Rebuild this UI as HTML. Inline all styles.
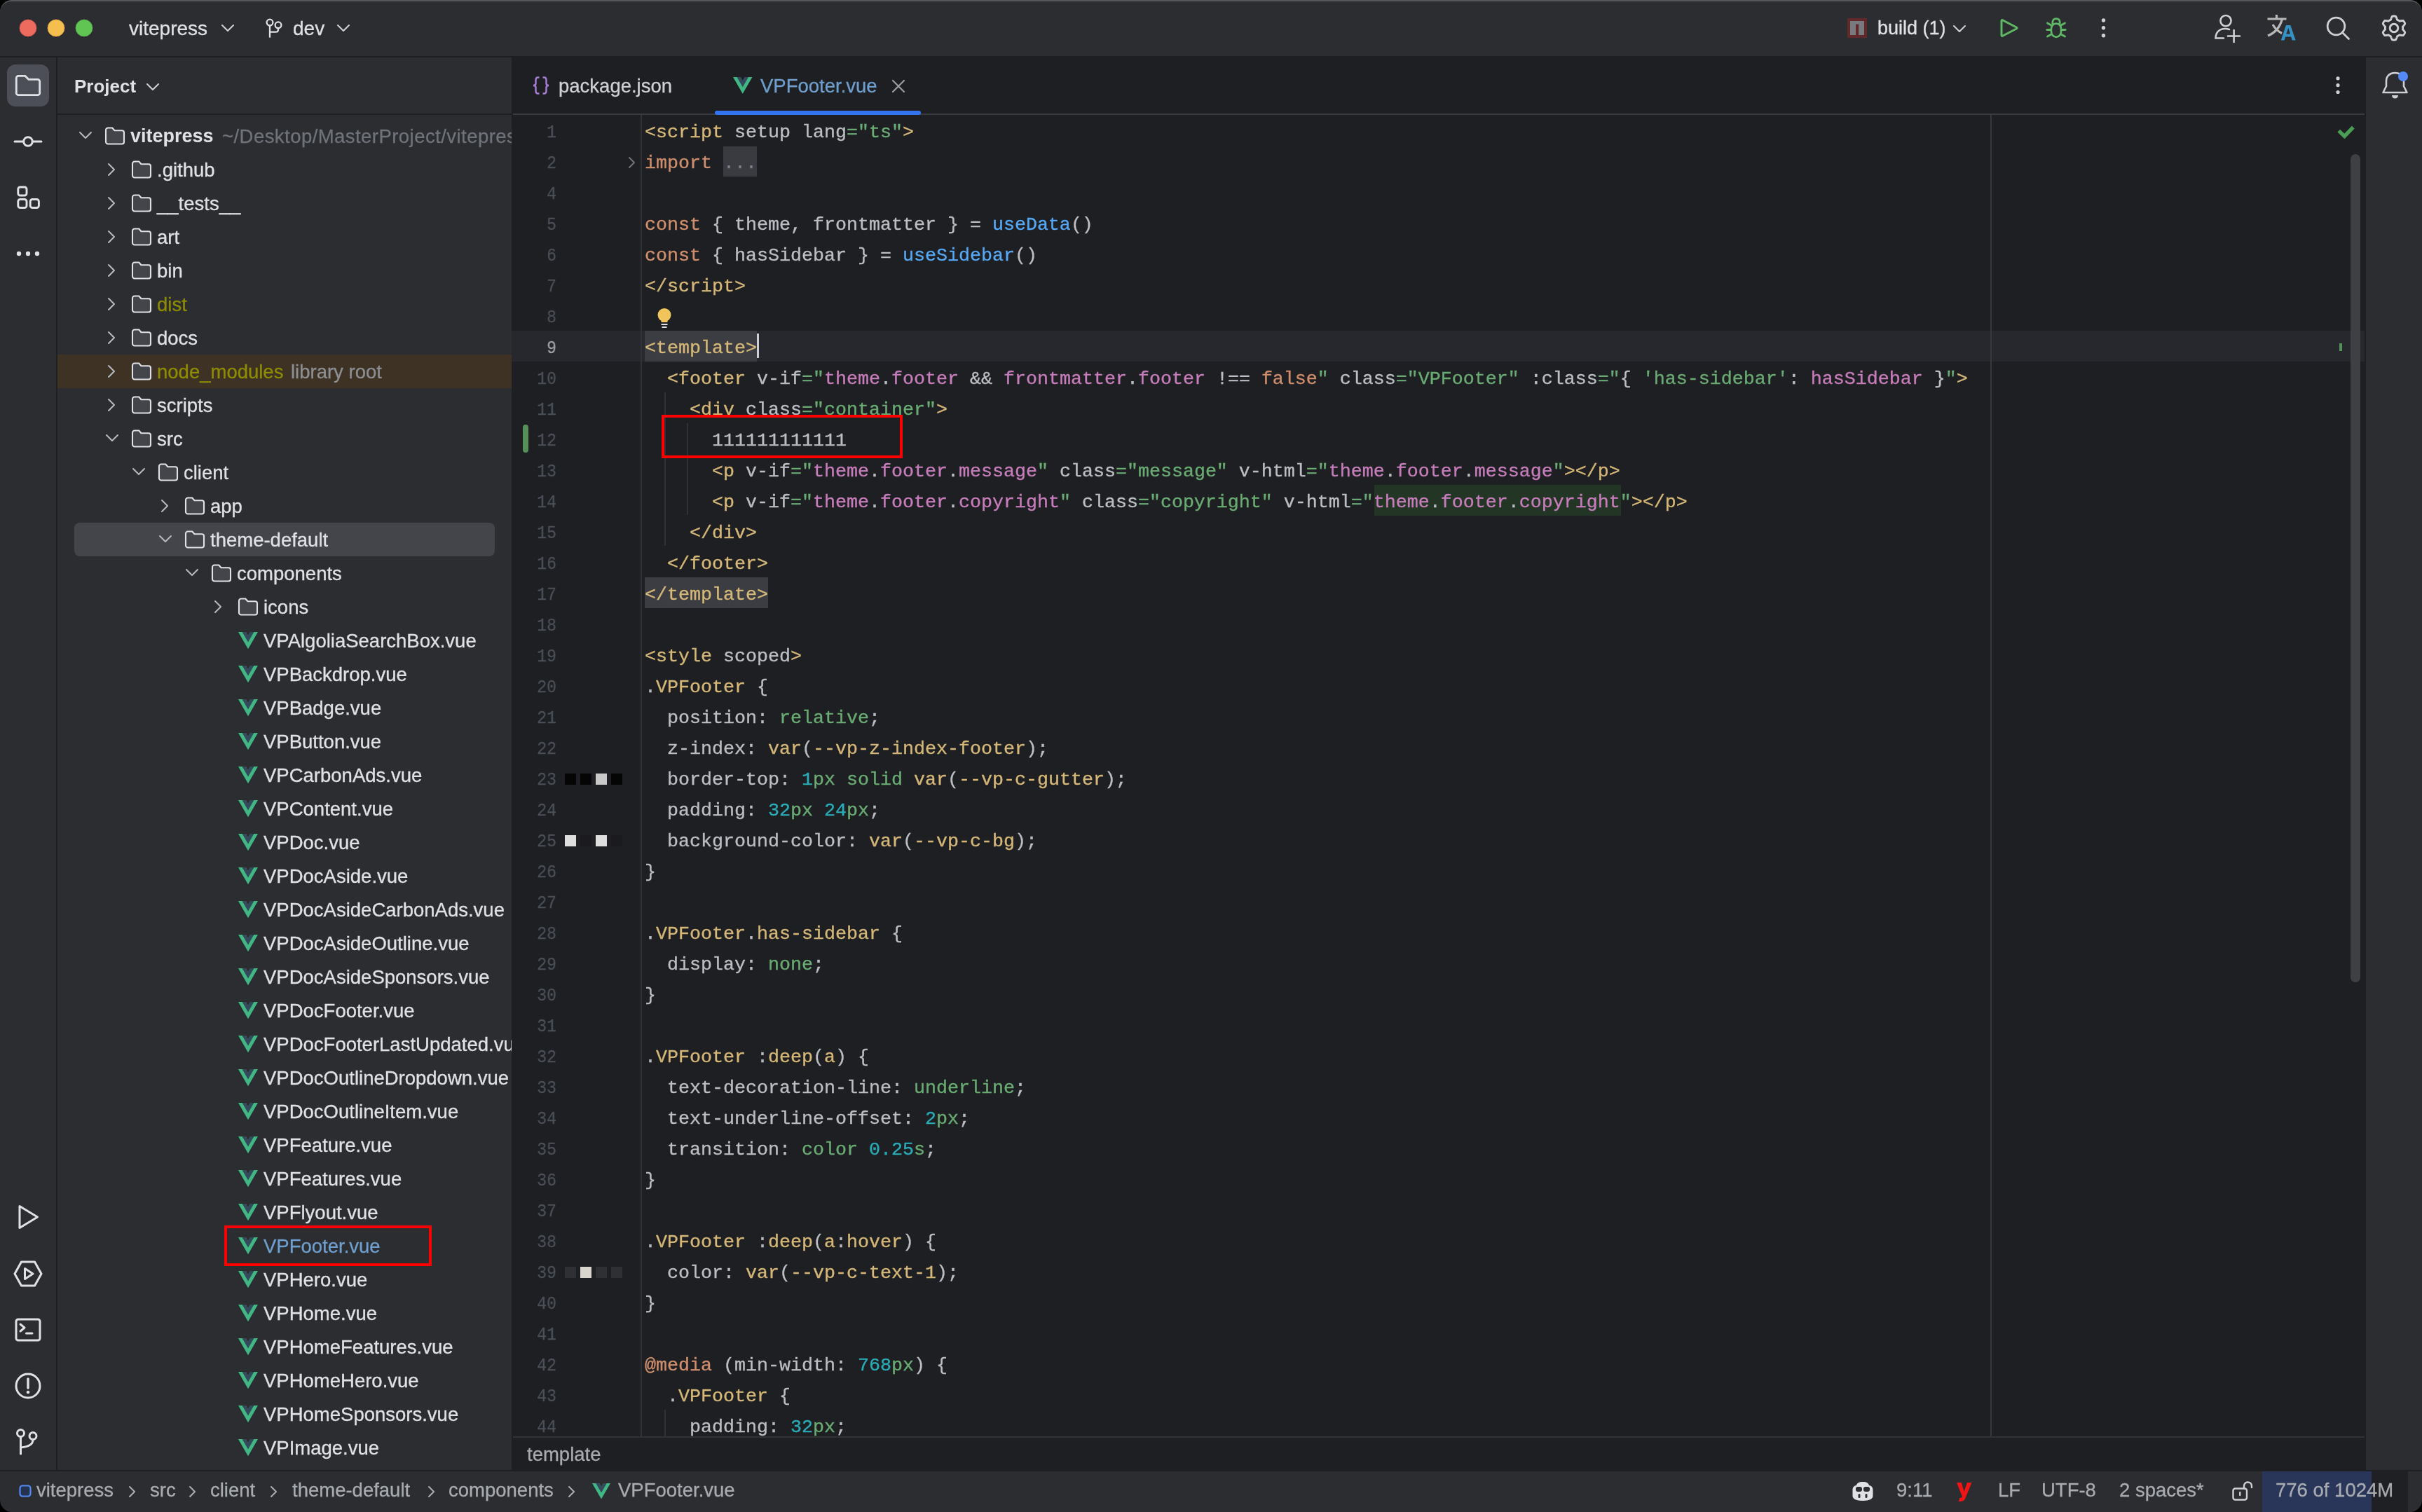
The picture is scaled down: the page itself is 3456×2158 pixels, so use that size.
<!DOCTYPE html><html><head><meta charset="utf-8"><style>html,body{margin:0;padding:0;background:#000;width:3456px;height:2158px;overflow:hidden}.t{will-change:transform}#w{position:absolute;left:0;top:0;width:3456px;height:2158px;border-radius:17px;overflow:hidden;background:#2B2D30}</style></head><body><div id="w"><div style="position:absolute;left:0px;top:80px;width:3456px;height:2px;background:#1E1F22;"></div><div style="position:absolute;left:80px;top:82px;width:2px;height:2016px;background:#1E1F22;"></div><div style="position:absolute;left:730px;top:82px;width:2646px;height:2016px;background:#1E1F22;"></div><div style="position:absolute;left:3376px;top:82px;width:80px;height:2016px;background:#2B2D30;"></div><div style="position:absolute;left:0px;top:2098px;width:3456px;height:2px;background:#1E1F22;"></div><div style="position:absolute;left:0px;top:0px;width:3456px;height:40px;background:transparent;box-sizing:border-box;border-top:2px solid #55575B;border-radius:17px 17px 0 0"></div><svg style="position:absolute;left:27px;top:27px;" width="26" height="26" viewBox="0 0 26 26"><circle cx="13" cy="13" r="12" fill="#EC6A5E" stroke="#D0584D" stroke-width="0.8"/></svg><svg style="position:absolute;left:67px;top:27px;" width="26" height="26" viewBox="0 0 26 26"><circle cx="13" cy="13" r="12" fill="#F4BF4F" stroke="#D6A440" stroke-width="0.8"/></svg><svg style="position:absolute;left:107px;top:27px;" width="26" height="26" viewBox="0 0 26 26"><circle cx="13" cy="13" r="12" fill="#61C554" stroke="#51A747" stroke-width="0.8"/></svg><div class="t" style="position:absolute;left:184px;top:23.50px;font:normal 28px/33.6px 'Liberation Sans', sans-serif;color:#DFE1E5;white-space:pre;-webkit-text-stroke:0.3px currentColor;">vitepress</div><svg style="position:absolute;left:315px;top:34px;" width="20" height="12" viewBox="0 0 20 12"><path d="M2 2 L10.0 10 L18 2" fill="none" stroke="#CED0D6" stroke-width="2.1" stroke-linecap="round" stroke-linejoin="round"/></svg><svg style="position:absolute;left:376px;top:24px;" width="30" height="34" viewBox="0 0 30 34"><g fill="none" stroke="#DFE1E5" stroke-width="2.3"><circle cx="9" cy="8.1" r="4.4"/><circle cx="21" cy="11.8" r="4.4"/><path d="M9 12.5 V29.6"/><path d="M21 16.2 V18 Q21 21.7 17.3 21.7 H9"/></g></svg><div class="t" style="position:absolute;left:418px;top:23.50px;font:normal 28px/33.6px 'Liberation Sans', sans-serif;color:#DFE1E5;white-space:pre;-webkit-text-stroke:0.3px currentColor;">dev</div><svg style="position:absolute;left:480px;top:34px;" width="20" height="12" viewBox="0 0 20 12"><path d="M2 2 L10.0 10 L18 2" fill="none" stroke="#CED0D6" stroke-width="2.1" stroke-linecap="round" stroke-linejoin="round"/></svg><svg style="position:absolute;left:2636px;top:26px;" width="28" height="28" viewBox="0 0 28 28"><rect x="0" y="0" width="28" height="28" fill="#62292B"/><rect x="4" y="4" width="20" height="20" fill="#787A7F"/><rect x="12" y="8.5" width="4.2" height="15.5" fill="#62292B"/></svg><div class="t" style="position:absolute;left:2679px;top:24.44px;font:normal 27px/32.4px 'Liberation Sans', sans-serif;color:#DFE1E5;white-space:pre;-webkit-text-stroke:0.3px currentColor;">build (1)</div><svg style="position:absolute;left:2786px;top:35px;" width="20" height="12" viewBox="0 0 20 12"><path d="M2 2 L10.0 10 L18 2" fill="none" stroke="#CED0D6" stroke-width="2.1" stroke-linecap="round" stroke-linejoin="round"/></svg><svg style="position:absolute;left:2850px;top:22px;" width="34" height="36" viewBox="0 0 34 36"><path d="M8 7 Q6 5.6 6 8 V28 Q6 30.4 8 29 L27.3 19 Q29 18 27.3 17 Z" fill="none" stroke="#5FB865" stroke-width="3" stroke-linejoin="round"/></svg><svg style="position:absolute;left:2916px;top:22px;" width="36" height="36" viewBox="0 0 36 36"><g fill="none" stroke="#5FB865" stroke-width="2.8" stroke-linecap="round"><path d="M12.8 11.5 V10 C12.8 6.5 15 4.6 18 4.6 C21 4.6 23.2 6.5 23.2 10 V11.5"/><path d="M18 11.6 C13.4 11.6 10.8 15 10.8 21.3 C10.8 27.5 14 30.8 18 30.8 C22 30.8 25.2 27.5 25.2 21.3 C25.2 15 22.6 11.6 18 11.6 Z"/><path d="M5.5 11 L11 14 M30.5 11 L25 14 M4.8 20.5 H10.5 M31.2 20.5 H25.5 M5.5 30 L11 27 M30.5 30 L25 27"/></g></svg><svg style="position:absolute;left:2996px;top:24px;" width="12" height="34" viewBox="0 0 12 34"><g fill="#CED0D6"><circle cx="5.5" cy="5" r="2.7"/><circle cx="5.5" cy="15.8" r="2.7"/><circle cx="5.5" cy="26.7" r="2.7"/></g></svg><svg style="position:absolute;left:3158px;top:20px;" width="42" height="42" viewBox="0 0 42 42"><g fill="none" stroke="#CED0D6" stroke-width="2.6" stroke-linecap="round"><circle cx="18" cy="9.6" r="7.6"/><path d="M15 34.5 H3.5 C3.5 26 9 21 17 21 C19 21 21 21.3 23 22"/><path d="M29.6 23 V40 M21 31.5 H38"/></g></svg><svg style="position:absolute;left:3234px;top:20px;" width="46" height="42" viewBox="0 0 46 42"><g fill="none" stroke="#B8B8B8" stroke-width="3.2"><path d="M1.5 7 H28.5 M14.5 1 V7"/><path d="M22.5 7 C19 20 12 27 2 31"/><path d="M9 15 C13 22 17 25 22 27.5"/></g><path d="M20.8 37.6 L28 16 H34.3 L41.7 37.6 H36.8 L35.2 32.6 H27.2 L25.6 37.6 Z M28.4 28.6 H34 L31.2 19.8 Z" fill="#3592C4"/></svg><svg style="position:absolute;left:3318px;top:22px;" width="38" height="38" viewBox="0 0 38 38"><g fill="none" stroke="#CED0D6" stroke-width="2.8" stroke-linecap="round"><circle cx="15.5" cy="15.5" r="12.3"/><path d="M24.5 24.5 L33.5 33.5"/></g></svg><svg style="position:absolute;left:3396px;top:20px;" width="40" height="40" viewBox="0 0 40 40"><g fill="none" stroke="#CED0D6" stroke-width="2.9" stroke-linejoin="round"><polygon points="20.00,3.00 20.30,3.00 20.59,3.01 20.89,3.02 21.19,3.04 21.48,3.06 21.78,3.09 22.07,3.13 22.37,3.17 22.61,3.51 22.84,3.89 23.06,4.28 23.26,4.67 23.45,5.06 23.63,5.45 23.79,5.85 23.94,6.24 24.08,6.64 24.21,7.04 24.33,7.44 24.43,7.84 24.52,8.23 24.72,8.32 24.92,8.40 25.12,8.49 25.32,8.58 25.52,8.68 25.72,8.77 25.92,8.87 26.11,8.98 26.30,9.09 26.49,9.20 26.68,9.31 26.86,9.43 27.05,9.55 27.23,9.68 27.41,9.81 27.58,9.94 27.76,10.07 27.93,10.21 28.32,10.08 28.72,9.97 29.12,9.87 29.53,9.78 29.94,9.71 30.36,9.64 30.78,9.59 31.21,9.54 31.65,9.51 32.09,9.49 32.53,9.49 32.98,9.49 33.40,9.53 33.58,9.77 33.75,10.01 33.93,10.25 34.09,10.49 34.26,10.74 34.42,10.99 34.57,11.24 34.72,11.50 34.87,11.76 35.01,12.02 35.15,12.28 35.28,12.55 35.41,12.82 35.53,13.09 35.65,13.36 35.76,13.63 35.59,14.02 35.37,14.41 35.14,14.79 34.91,15.16 34.66,15.52 34.41,15.87 34.15,16.21 33.88,16.54 33.61,16.86 33.33,17.17 33.04,17.47 32.75,17.75 32.45,18.03 32.48,18.25 32.51,18.46 32.53,18.68 32.55,18.90 32.57,19.12 32.58,19.34 32.59,19.56 32.60,19.78 32.60,20.00 32.60,20.22 32.59,20.44 32.58,20.66 32.57,20.88 32.55,21.10 32.53,21.32 32.51,21.54 32.48,21.75 32.45,21.97 32.75,22.25 33.04,22.53 33.33,22.83 33.61,23.14 33.88,23.46 34.15,23.79 34.41,24.13 34.66,24.48 34.91,24.84 35.14,25.21 35.37,25.59 35.59,25.98 35.76,26.37 35.65,26.64 35.53,26.91 35.41,27.18 35.28,27.45 35.15,27.72 35.01,27.98 34.87,28.24 34.72,28.50 34.57,28.76 34.42,29.01 34.26,29.26 34.09,29.51 33.93,29.75 33.75,29.99 33.58,30.23 33.40,30.47 32.98,30.51 32.53,30.51 32.09,30.51 31.65,30.49 31.21,30.46 30.78,30.41 30.36,30.36 29.94,30.29 29.53,30.22 29.12,30.13 28.72,30.03 28.32,29.92 27.93,29.79 27.76,29.93 27.58,30.06 27.41,30.19 27.23,30.32 27.05,30.45 26.86,30.57 26.68,30.69 26.49,30.80 26.30,30.91 26.11,31.02 25.92,31.13 25.72,31.23 25.52,31.32 25.32,31.42 25.12,31.51 24.92,31.60 24.72,31.68 24.52,31.77 24.43,32.16 24.33,32.56 24.21,32.96 24.08,33.36 23.94,33.76 23.79,34.15 23.63,34.55 23.45,34.94 23.26,35.33 23.06,35.72 22.84,36.11 22.61,36.49 22.37,36.83 22.07,36.87 21.78,36.91 21.48,36.94 21.19,36.96 20.89,36.98 20.59,36.99 20.30,37.00 20.00,37.00 19.70,37.00 19.41,36.99 19.11,36.98 18.81,36.96 18.52,36.94 18.22,36.91 17.93,36.87 17.63,36.83 17.39,36.49 17.16,36.11 16.94,35.72 16.74,35.33 16.55,34.94 16.37,34.55 16.21,34.15 16.06,33.76 15.92,33.36 15.79,32.96 15.67,32.56 15.57,32.16 15.48,31.77 15.28,31.68 15.08,31.60 14.88,31.51 14.68,31.42 14.48,31.32 14.28,31.23 14.08,31.13 13.89,31.02 13.70,30.91 13.51,30.80 13.32,30.69 13.14,30.57 12.95,30.45 12.77,30.32 12.59,30.19 12.42,30.06 12.24,29.93 12.07,29.79 11.68,29.92 11.28,30.03 10.88,30.13 10.47,30.22 10.06,30.29 9.64,30.36 9.22,30.41 8.79,30.46 8.35,30.49 7.91,30.51 7.47,30.51 7.02,30.51 6.60,30.47 6.42,30.23 6.25,29.99 6.07,29.75 5.91,29.51 5.74,29.26 5.58,29.01 5.43,28.76 5.28,28.50 5.13,28.24 4.99,27.98 4.85,27.72 4.72,27.45 4.59,27.18 4.47,26.91 4.35,26.64 4.24,26.37 4.41,25.98 4.63,25.59 4.86,25.21 5.09,24.84 5.34,24.48 5.59,24.13 5.85,23.79 6.12,23.46 6.39,23.14 6.67,22.83 6.96,22.53 7.25,22.25 7.55,21.97 7.52,21.75 7.49,21.54 7.47,21.32 7.45,21.10 7.43,20.88 7.42,20.66 7.41,20.44 7.40,20.22 7.40,20.00 7.40,19.78 7.41,19.56 7.42,19.34 7.43,19.12 7.45,18.90 7.47,18.68 7.49,18.46 7.52,18.25 7.55,18.03 7.25,17.75 6.96,17.47 6.67,17.17 6.39,16.86 6.12,16.54 5.85,16.21 5.59,15.87 5.34,15.52 5.09,15.16 4.86,14.79 4.63,14.41 4.41,14.02 4.24,13.63 4.35,13.36 4.47,13.09 4.59,12.82 4.72,12.55 4.85,12.28 4.99,12.02 5.13,11.76 5.28,11.50 5.43,11.24 5.58,10.99 5.74,10.74 5.91,10.49 6.07,10.25 6.25,10.01 6.42,9.77 6.60,9.53 7.02,9.49 7.47,9.49 7.91,9.49 8.35,9.51 8.79,9.54 9.22,9.59 9.64,9.64 10.06,9.71 10.47,9.78 10.88,9.87 11.28,9.97 11.68,10.08 12.07,10.21 12.24,10.07 12.42,9.94 12.59,9.81 12.77,9.68 12.95,9.55 13.14,9.43 13.32,9.31 13.51,9.20 13.70,9.09 13.89,8.98 14.08,8.87 14.28,8.77 14.48,8.68 14.68,8.58 14.88,8.49 15.08,8.40 15.28,8.32 15.48,8.23 15.57,7.84 15.67,7.44 15.79,7.04 15.92,6.64 16.06,6.24 16.21,5.85 16.37,5.45 16.55,5.06 16.74,4.67 16.94,4.28 17.16,3.89 17.39,3.51 17.63,3.17 17.93,3.13 18.22,3.09 18.52,3.06 18.81,3.04 19.11,3.02 19.41,3.01 19.70,3.00"/><circle cx="20" cy="20" r="5.8"/></g></svg><div style="position:absolute;left:10px;top:92px;width:60px;height:60px;background:#4C4F57;border-radius:12px"></div><svg style="position:absolute;left:20px;top:106px;" width="40" height="36" viewBox="0 0 40 36"><path d="M3.3 5.3 a3 3 0 0 1 3-3 h9.5 l4.9 5 h13 a3 3 0 0 1 3 3 v16.4 a3 3 0 0 1 -3 3 h-27.4 a3 3 0 0 1 -3 -3 z" fill="none" stroke="#DFE1E5" stroke-width="2.8" stroke-linejoin="round"/></svg><svg style="position:absolute;left:18px;top:190px;" width="44" height="24" viewBox="0 0 44 24"><g fill="none" stroke="#DFE1E5" stroke-width="3" stroke-linecap="round"><circle cx="22" cy="12" r="6.3"/><path d="M3 12 H15.7 M28.3 12 H41"/></g></svg><svg style="position:absolute;left:22px;top:263px;" width="36" height="37" viewBox="0 0 36 37"><g fill="none" stroke="#DFE1E5" stroke-width="2.9"><rect x="3.8" y="4" width="12.2" height="12" rx="3"/><rect x="3.8" y="21.5" width="12.2" height="12" rx="3"/><rect x="21.2" y="21.5" width="12.2" height="12" rx="3"/></g></svg><svg style="position:absolute;left:20px;top:354px;" width="40" height="16" viewBox="0 0 40 16"><g fill="#DFE1E5"><circle cx="7" cy="8" r="3.2"/><circle cx="20" cy="8" r="3.2"/><circle cx="33" cy="8" r="3.2"/></g></svg><svg style="position:absolute;left:20px;top:1716px;" width="40" height="42" viewBox="0 0 40 42"><path d="M8 5.5 L33.5 21 L8 36.5 Z" fill="none" stroke="#DFE1E5" stroke-width="3" stroke-linejoin="round"/></svg><svg style="position:absolute;left:18px;top:1797px;" width="44" height="42" viewBox="0 0 44 42"><g fill="none" stroke="#DFE1E5" stroke-width="3" stroke-linejoin="round"><path d="M12.5 4 H31.5 L41 21 L31.5 38 H12.5 L3 21 Z"/><path d="M17.5 13.5 L29 21 L17.5 28.5 Z"/></g></svg><svg style="position:absolute;left:18px;top:1879px;" width="44" height="38" viewBox="0 0 44 38"><g fill="none" stroke="#DFE1E5" stroke-width="3" stroke-linejoin="round" stroke-linecap="round"><rect x="5" y="4" width="34" height="30" rx="3"/><path d="M11 11 L17 16 L11 21"/><path d="M19.5 24 H28"/></g></svg><svg style="position:absolute;left:19px;top:1957px;" width="42" height="42" viewBox="0 0 42 42"><g fill="none" stroke="#DFE1E5" stroke-width="3"><circle cx="21" cy="21" r="17"/></g><path d="M21 11 V24" stroke="#DFE1E5" stroke-width="3.4" stroke-linecap="round"/><circle cx="21" cy="30" r="2.3" fill="#DFE1E5"/></svg><svg style="position:absolute;left:20px;top:2036px;" width="40" height="44" viewBox="0 0 40 44"><g fill="none" stroke="#DFE1E5" stroke-width="3" stroke-linecap="round"><circle cx="9.5" cy="9.5" r="5"/><circle cx="27" cy="13.5" r="5"/><path d="M9.5 14.5 V39"/><path d="M27 18.5 C27 26 21 28.5 9.5 30"/></g></svg><div style="position:absolute;left:82px;top:162px;width:648px;height:2px;background:#1E1F22;"></div><div class="t" style="position:absolute;left:106px;top:107.79px;font:bold 26px/31.2px 'Liberation Sans', sans-serif;color:#DFE1E5;white-space:pre;">Project</div><svg style="position:absolute;left:208px;top:117.5px;" width="20" height="12" viewBox="0 0 20 12"><path d="M2 2 L10.0 10 L18 2" fill="none" stroke="#CED0D6" stroke-width="2.1" stroke-linecap="round" stroke-linejoin="round"/></svg><div style="position:absolute;left:82px;top:506px;width:648px;height:48px;background:#3D3223;"></div><div style="position:absolute;left:106px;top:746px;width:600px;height:48px;background:#43454A;border-radius:8px"></div><div style="position:absolute;left:82px;top:164px;width:648px;height:1934px;overflow:hidden"><svg style="position:absolute;left:30px;top:23px;" width="20" height="13" viewBox="0 0 20 13"><path d="M2 2 L10 10 L18 2" fill="none" stroke="#B4B8BF" stroke-width="2.1" stroke-linecap="round" stroke-linejoin="round"/></svg><svg style="position:absolute;left:65.5px;top:16px;" width="32" height="28" viewBox="0 0 32 28"><path d="M3 5.5 a3 3 0 0 1 3-3 h6.2 l3.3 3.8 h10.5 a3 3 0 0 1 3 3 v13.2 a3 3 0 0 1 -3 3 h-20 a3 3 0 0 1 -3 -3 z" fill="#43454A" stroke="#DFE1E5" stroke-width="2.1" stroke-linejoin="round"/></svg><div class="t" style="position:absolute;left:104.30000000000001px;top:14.44px;font:bold 27px/32.4px 'Liberation Sans', sans-serif;color:#DFE1E5;white-space:pre;">vitepress</div><div class="t" style="position:absolute;left:235px;top:13.97px;font:normal 27.5px/33.0px 'Liberation Sans', sans-serif;color:#6F737A;white-space:pre;-webkit-text-stroke:0.3px currentColor;letter-spacing:0.45px">~/Desktop/MasterProject/vitepress</div><svg style="position:absolute;left:71px;top:68px;" width="13" height="20" viewBox="0 0 13 20"><path d="M2 2 L10 10 L2 18" fill="none" stroke="#B4B8BF" stroke-width="2.1" stroke-linecap="round" stroke-linejoin="round"/></svg><svg style="position:absolute;left:103.5px;top:64px;" width="32" height="28" viewBox="0 0 32 28"><path d="M3 5.5 a3 3 0 0 1 3-3 h6.2 l3.3 3.8 h10.5 a3 3 0 0 1 3 3 v13.2 a3 3 0 0 1 -3 3 h-20 a3 3 0 0 1 -3 -3 z" fill="#43454A" stroke="#DFE1E5" stroke-width="2.1" stroke-linejoin="round"/></svg><div class="t" style="position:absolute;left:142.3px;top:61.97px;font:normal 27.5px/33.0px 'Liberation Sans', sans-serif;color:#DFE1E5;white-space:pre;-webkit-text-stroke:0.3px currentColor;">.github</div><svg style="position:absolute;left:71px;top:116px;" width="13" height="20" viewBox="0 0 13 20"><path d="M2 2 L10 10 L2 18" fill="none" stroke="#B4B8BF" stroke-width="2.1" stroke-linecap="round" stroke-linejoin="round"/></svg><svg style="position:absolute;left:103.5px;top:112px;" width="32" height="28" viewBox="0 0 32 28"><path d="M3 5.5 a3 3 0 0 1 3-3 h6.2 l3.3 3.8 h10.5 a3 3 0 0 1 3 3 v13.2 a3 3 0 0 1 -3 3 h-20 a3 3 0 0 1 -3 -3 z" fill="#43454A" stroke="#DFE1E5" stroke-width="2.1" stroke-linejoin="round"/></svg><div class="t" style="position:absolute;left:142.3px;top:109.97px;font:normal 27.5px/33.0px 'Liberation Sans', sans-serif;color:#DFE1E5;white-space:pre;-webkit-text-stroke:0.3px currentColor;">__tests__</div><svg style="position:absolute;left:71px;top:164px;" width="13" height="20" viewBox="0 0 13 20"><path d="M2 2 L10 10 L2 18" fill="none" stroke="#B4B8BF" stroke-width="2.1" stroke-linecap="round" stroke-linejoin="round"/></svg><svg style="position:absolute;left:103.5px;top:160px;" width="32" height="28" viewBox="0 0 32 28"><path d="M3 5.5 a3 3 0 0 1 3-3 h6.2 l3.3 3.8 h10.5 a3 3 0 0 1 3 3 v13.2 a3 3 0 0 1 -3 3 h-20 a3 3 0 0 1 -3 -3 z" fill="#43454A" stroke="#DFE1E5" stroke-width="2.1" stroke-linejoin="round"/></svg><div class="t" style="position:absolute;left:142.3px;top:157.97px;font:normal 27.5px/33.0px 'Liberation Sans', sans-serif;color:#DFE1E5;white-space:pre;-webkit-text-stroke:0.3px currentColor;">art</div><svg style="position:absolute;left:71px;top:212px;" width="13" height="20" viewBox="0 0 13 20"><path d="M2 2 L10 10 L2 18" fill="none" stroke="#B4B8BF" stroke-width="2.1" stroke-linecap="round" stroke-linejoin="round"/></svg><svg style="position:absolute;left:103.5px;top:208px;" width="32" height="28" viewBox="0 0 32 28"><path d="M3 5.5 a3 3 0 0 1 3-3 h6.2 l3.3 3.8 h10.5 a3 3 0 0 1 3 3 v13.2 a3 3 0 0 1 -3 3 h-20 a3 3 0 0 1 -3 -3 z" fill="#43454A" stroke="#DFE1E5" stroke-width="2.1" stroke-linejoin="round"/></svg><div class="t" style="position:absolute;left:142.3px;top:205.97px;font:normal 27.5px/33.0px 'Liberation Sans', sans-serif;color:#DFE1E5;white-space:pre;-webkit-text-stroke:0.3px currentColor;">bin</div><svg style="position:absolute;left:71px;top:260px;" width="13" height="20" viewBox="0 0 13 20"><path d="M2 2 L10 10 L2 18" fill="none" stroke="#B4B8BF" stroke-width="2.1" stroke-linecap="round" stroke-linejoin="round"/></svg><svg style="position:absolute;left:103.5px;top:256px;" width="32" height="28" viewBox="0 0 32 28"><path d="M3 5.5 a3 3 0 0 1 3-3 h6.2 l3.3 3.8 h10.5 a3 3 0 0 1 3 3 v13.2 a3 3 0 0 1 -3 3 h-20 a3 3 0 0 1 -3 -3 z" fill="#43454A" stroke="#DFE1E5" stroke-width="2.1" stroke-linejoin="round"/></svg><div class="t" style="position:absolute;left:142.3px;top:253.97px;font:normal 27.5px/33.0px 'Liberation Sans', sans-serif;color:#8E8C05;white-space:pre;-webkit-text-stroke:0.3px currentColor;">dist</div><svg style="position:absolute;left:71px;top:308px;" width="13" height="20" viewBox="0 0 13 20"><path d="M2 2 L10 10 L2 18" fill="none" stroke="#B4B8BF" stroke-width="2.1" stroke-linecap="round" stroke-linejoin="round"/></svg><svg style="position:absolute;left:103.5px;top:304px;" width="32" height="28" viewBox="0 0 32 28"><path d="M3 5.5 a3 3 0 0 1 3-3 h6.2 l3.3 3.8 h10.5 a3 3 0 0 1 3 3 v13.2 a3 3 0 0 1 -3 3 h-20 a3 3 0 0 1 -3 -3 z" fill="#43454A" stroke="#DFE1E5" stroke-width="2.1" stroke-linejoin="round"/></svg><div class="t" style="position:absolute;left:142.3px;top:301.97px;font:normal 27.5px/33.0px 'Liberation Sans', sans-serif;color:#DFE1E5;white-space:pre;-webkit-text-stroke:0.3px currentColor;">docs</div><svg style="position:absolute;left:71px;top:356px;" width="13" height="20" viewBox="0 0 13 20"><path d="M2 2 L10 10 L2 18" fill="none" stroke="#B4B8BF" stroke-width="2.1" stroke-linecap="round" stroke-linejoin="round"/></svg><svg style="position:absolute;left:103.5px;top:352px;" width="32" height="28" viewBox="0 0 32 28"><path d="M3 5.5 a3 3 0 0 1 3-3 h6.2 l3.3 3.8 h10.5 a3 3 0 0 1 3 3 v13.2 a3 3 0 0 1 -3 3 h-20 a3 3 0 0 1 -3 -3 z" fill="#43454A" stroke="#DFE1E5" stroke-width="2.1" stroke-linejoin="round"/></svg><div class="t" style="position:absolute;left:142.3px;top:349.97px;font:normal 27.5px/33.0px 'Liberation Sans', sans-serif;color:#8E8C05;white-space:pre;-webkit-text-stroke:0.3px currentColor;">node_modules</div><div class="t" style="position:absolute;left:332.5px;top:349.97px;font:normal 27.5px/33.0px 'Liberation Sans', sans-serif;color:#8C8F94;white-space:pre;-webkit-text-stroke:0.3px currentColor;">library root</div><svg style="position:absolute;left:71px;top:404px;" width="13" height="20" viewBox="0 0 13 20"><path d="M2 2 L10 10 L2 18" fill="none" stroke="#B4B8BF" stroke-width="2.1" stroke-linecap="round" stroke-linejoin="round"/></svg><svg style="position:absolute;left:103.5px;top:400px;" width="32" height="28" viewBox="0 0 32 28"><path d="M3 5.5 a3 3 0 0 1 3-3 h6.2 l3.3 3.8 h10.5 a3 3 0 0 1 3 3 v13.2 a3 3 0 0 1 -3 3 h-20 a3 3 0 0 1 -3 -3 z" fill="#43454A" stroke="#DFE1E5" stroke-width="2.1" stroke-linejoin="round"/></svg><div class="t" style="position:absolute;left:142.3px;top:397.97px;font:normal 27.5px/33.0px 'Liberation Sans', sans-serif;color:#DFE1E5;white-space:pre;-webkit-text-stroke:0.3px currentColor;">scripts</div><svg style="position:absolute;left:68px;top:455px;" width="20" height="13" viewBox="0 0 20 13"><path d="M2 2 L10 10 L18 2" fill="none" stroke="#B4B8BF" stroke-width="2.1" stroke-linecap="round" stroke-linejoin="round"/></svg><svg style="position:absolute;left:103.5px;top:448px;" width="32" height="28" viewBox="0 0 32 28"><path d="M3 5.5 a3 3 0 0 1 3-3 h6.2 l3.3 3.8 h10.5 a3 3 0 0 1 3 3 v13.2 a3 3 0 0 1 -3 3 h-20 a3 3 0 0 1 -3 -3 z" fill="#43454A" stroke="#DFE1E5" stroke-width="2.1" stroke-linejoin="round"/></svg><div class="t" style="position:absolute;left:142.3px;top:445.97px;font:normal 27.5px/33.0px 'Liberation Sans', sans-serif;color:#DFE1E5;white-space:pre;-webkit-text-stroke:0.3px currentColor;">src</div><svg style="position:absolute;left:106px;top:503px;" width="20" height="13" viewBox="0 0 20 13"><path d="M2 2 L10 10 L18 2" fill="none" stroke="#B4B8BF" stroke-width="2.1" stroke-linecap="round" stroke-linejoin="round"/></svg><svg style="position:absolute;left:141.5px;top:496px;" width="32" height="28" viewBox="0 0 32 28"><path d="M3 5.5 a3 3 0 0 1 3-3 h6.2 l3.3 3.8 h10.5 a3 3 0 0 1 3 3 v13.2 a3 3 0 0 1 -3 3 h-20 a3 3 0 0 1 -3 -3 z" fill="#43454A" stroke="#DFE1E5" stroke-width="2.1" stroke-linejoin="round"/></svg><div class="t" style="position:absolute;left:180.3px;top:493.97px;font:normal 27.5px/33.0px 'Liberation Sans', sans-serif;color:#DFE1E5;white-space:pre;-webkit-text-stroke:0.3px currentColor;">client</div><svg style="position:absolute;left:147px;top:548px;" width="13" height="20" viewBox="0 0 13 20"><path d="M2 2 L10 10 L2 18" fill="none" stroke="#B4B8BF" stroke-width="2.1" stroke-linecap="round" stroke-linejoin="round"/></svg><svg style="position:absolute;left:179.5px;top:544px;" width="32" height="28" viewBox="0 0 32 28"><path d="M3 5.5 a3 3 0 0 1 3-3 h6.2 l3.3 3.8 h10.5 a3 3 0 0 1 3 3 v13.2 a3 3 0 0 1 -3 3 h-20 a3 3 0 0 1 -3 -3 z" fill="#43454A" stroke="#DFE1E5" stroke-width="2.1" stroke-linejoin="round"/></svg><div class="t" style="position:absolute;left:218.3px;top:541.97px;font:normal 27.5px/33.0px 'Liberation Sans', sans-serif;color:#DFE1E5;white-space:pre;-webkit-text-stroke:0.3px currentColor;">app</div><svg style="position:absolute;left:144px;top:599px;" width="20" height="13" viewBox="0 0 20 13"><path d="M2 2 L10 10 L18 2" fill="none" stroke="#B4B8BF" stroke-width="2.1" stroke-linecap="round" stroke-linejoin="round"/></svg><svg style="position:absolute;left:179.5px;top:592px;" width="32" height="28" viewBox="0 0 32 28"><path d="M3 5.5 a3 3 0 0 1 3-3 h6.2 l3.3 3.8 h10.5 a3 3 0 0 1 3 3 v13.2 a3 3 0 0 1 -3 3 h-20 a3 3 0 0 1 -3 -3 z" fill="#43454A" stroke="#DFE1E5" stroke-width="2.1" stroke-linejoin="round"/></svg><div class="t" style="position:absolute;left:218.3px;top:589.97px;font:normal 27.5px/33.0px 'Liberation Sans', sans-serif;color:#DFE1E5;white-space:pre;-webkit-text-stroke:0.3px currentColor;">theme-default</div><svg style="position:absolute;left:182px;top:647px;" width="20" height="13" viewBox="0 0 20 13"><path d="M2 2 L10 10 L18 2" fill="none" stroke="#B4B8BF" stroke-width="2.1" stroke-linecap="round" stroke-linejoin="round"/></svg><svg style="position:absolute;left:217.5px;top:640px;" width="32" height="28" viewBox="0 0 32 28"><path d="M3 5.5 a3 3 0 0 1 3-3 h6.2 l3.3 3.8 h10.5 a3 3 0 0 1 3 3 v13.2 a3 3 0 0 1 -3 3 h-20 a3 3 0 0 1 -3 -3 z" fill="#43454A" stroke="#DFE1E5" stroke-width="2.1" stroke-linejoin="round"/></svg><div class="t" style="position:absolute;left:256.3px;top:637.97px;font:normal 27.5px/33.0px 'Liberation Sans', sans-serif;color:#DFE1E5;white-space:pre;-webkit-text-stroke:0.3px currentColor;">components</div><svg style="position:absolute;left:223px;top:692px;" width="13" height="20" viewBox="0 0 13 20"><path d="M2 2 L10 10 L2 18" fill="none" stroke="#B4B8BF" stroke-width="2.1" stroke-linecap="round" stroke-linejoin="round"/></svg><svg style="position:absolute;left:255.5px;top:688px;" width="32" height="28" viewBox="0 0 32 28"><path d="M3 5.5 a3 3 0 0 1 3-3 h6.2 l3.3 3.8 h10.5 a3 3 0 0 1 3 3 v13.2 a3 3 0 0 1 -3 3 h-20 a3 3 0 0 1 -3 -3 z" fill="#43454A" stroke="#DFE1E5" stroke-width="2.1" stroke-linejoin="round"/></svg><div class="t" style="position:absolute;left:294.3px;top:685.97px;font:normal 27.5px/33.0px 'Liberation Sans', sans-serif;color:#DFE1E5;white-space:pre;-webkit-text-stroke:0.3px currentColor;">icons</div><svg style="position:absolute;left:258px;top:738px;" width="28" height="24.25" viewBox="0 0 261.76 226.69"><path d="M161.096.001l-30.225 52.351L100.647.001H-.005l130.877 226.688L261.749.001z" fill="#41B883"/><path d="M161.096.001l-30.225 52.351L100.647.001H52.346l78.526 136.01L209.398.001z" fill="#34495E"/></svg><div class="t" style="position:absolute;left:294.3px;top:733.97px;font:normal 27.5px/33.0px 'Liberation Sans', sans-serif;color:#DFE1E5;white-space:pre;-webkit-text-stroke:0.3px currentColor;">VPAlgoliaSearchBox.vue</div><svg style="position:absolute;left:258px;top:786px;" width="28" height="24.25" viewBox="0 0 261.76 226.69"><path d="M161.096.001l-30.225 52.351L100.647.001H-.005l130.877 226.688L261.749.001z" fill="#41B883"/><path d="M161.096.001l-30.225 52.351L100.647.001H52.346l78.526 136.01L209.398.001z" fill="#34495E"/></svg><div class="t" style="position:absolute;left:294.3px;top:781.97px;font:normal 27.5px/33.0px 'Liberation Sans', sans-serif;color:#DFE1E5;white-space:pre;-webkit-text-stroke:0.3px currentColor;">VPBackdrop.vue</div><svg style="position:absolute;left:258px;top:834px;" width="28" height="24.25" viewBox="0 0 261.76 226.69"><path d="M161.096.001l-30.225 52.351L100.647.001H-.005l130.877 226.688L261.749.001z" fill="#41B883"/><path d="M161.096.001l-30.225 52.351L100.647.001H52.346l78.526 136.01L209.398.001z" fill="#34495E"/></svg><div class="t" style="position:absolute;left:294.3px;top:829.97px;font:normal 27.5px/33.0px 'Liberation Sans', sans-serif;color:#DFE1E5;white-space:pre;-webkit-text-stroke:0.3px currentColor;">VPBadge.vue</div><svg style="position:absolute;left:258px;top:882px;" width="28" height="24.25" viewBox="0 0 261.76 226.69"><path d="M161.096.001l-30.225 52.351L100.647.001H-.005l130.877 226.688L261.749.001z" fill="#41B883"/><path d="M161.096.001l-30.225 52.351L100.647.001H52.346l78.526 136.01L209.398.001z" fill="#34495E"/></svg><div class="t" style="position:absolute;left:294.3px;top:877.97px;font:normal 27.5px/33.0px 'Liberation Sans', sans-serif;color:#DFE1E5;white-space:pre;-webkit-text-stroke:0.3px currentColor;">VPButton.vue</div><svg style="position:absolute;left:258px;top:930px;" width="28" height="24.25" viewBox="0 0 261.76 226.69"><path d="M161.096.001l-30.225 52.351L100.647.001H-.005l130.877 226.688L261.749.001z" fill="#41B883"/><path d="M161.096.001l-30.225 52.351L100.647.001H52.346l78.526 136.01L209.398.001z" fill="#34495E"/></svg><div class="t" style="position:absolute;left:294.3px;top:925.97px;font:normal 27.5px/33.0px 'Liberation Sans', sans-serif;color:#DFE1E5;white-space:pre;-webkit-text-stroke:0.3px currentColor;">VPCarbonAds.vue</div><svg style="position:absolute;left:258px;top:978px;" width="28" height="24.25" viewBox="0 0 261.76 226.69"><path d="M161.096.001l-30.225 52.351L100.647.001H-.005l130.877 226.688L261.749.001z" fill="#41B883"/><path d="M161.096.001l-30.225 52.351L100.647.001H52.346l78.526 136.01L209.398.001z" fill="#34495E"/></svg><div class="t" style="position:absolute;left:294.3px;top:973.97px;font:normal 27.5px/33.0px 'Liberation Sans', sans-serif;color:#DFE1E5;white-space:pre;-webkit-text-stroke:0.3px currentColor;">VPContent.vue</div><svg style="position:absolute;left:258px;top:1026px;" width="28" height="24.25" viewBox="0 0 261.76 226.69"><path d="M161.096.001l-30.225 52.351L100.647.001H-.005l130.877 226.688L261.749.001z" fill="#41B883"/><path d="M161.096.001l-30.225 52.351L100.647.001H52.346l78.526 136.01L209.398.001z" fill="#34495E"/></svg><div class="t" style="position:absolute;left:294.3px;top:1021.97px;font:normal 27.5px/33.0px 'Liberation Sans', sans-serif;color:#DFE1E5;white-space:pre;-webkit-text-stroke:0.3px currentColor;">VPDoc.vue</div><svg style="position:absolute;left:258px;top:1074px;" width="28" height="24.25" viewBox="0 0 261.76 226.69"><path d="M161.096.001l-30.225 52.351L100.647.001H-.005l130.877 226.688L261.749.001z" fill="#41B883"/><path d="M161.096.001l-30.225 52.351L100.647.001H52.346l78.526 136.01L209.398.001z" fill="#34495E"/></svg><div class="t" style="position:absolute;left:294.3px;top:1069.97px;font:normal 27.5px/33.0px 'Liberation Sans', sans-serif;color:#DFE1E5;white-space:pre;-webkit-text-stroke:0.3px currentColor;">VPDocAside.vue</div><svg style="position:absolute;left:258px;top:1122px;" width="28" height="24.25" viewBox="0 0 261.76 226.69"><path d="M161.096.001l-30.225 52.351L100.647.001H-.005l130.877 226.688L261.749.001z" fill="#41B883"/><path d="M161.096.001l-30.225 52.351L100.647.001H52.346l78.526 136.01L209.398.001z" fill="#34495E"/></svg><div class="t" style="position:absolute;left:294.3px;top:1117.97px;font:normal 27.5px/33.0px 'Liberation Sans', sans-serif;color:#DFE1E5;white-space:pre;-webkit-text-stroke:0.3px currentColor;">VPDocAsideCarbonAds.vue</div><svg style="position:absolute;left:258px;top:1170px;" width="28" height="24.25" viewBox="0 0 261.76 226.69"><path d="M161.096.001l-30.225 52.351L100.647.001H-.005l130.877 226.688L261.749.001z" fill="#41B883"/><path d="M161.096.001l-30.225 52.351L100.647.001H52.346l78.526 136.01L209.398.001z" fill="#34495E"/></svg><div class="t" style="position:absolute;left:294.3px;top:1165.97px;font:normal 27.5px/33.0px 'Liberation Sans', sans-serif;color:#DFE1E5;white-space:pre;-webkit-text-stroke:0.3px currentColor;">VPDocAsideOutline.vue</div><svg style="position:absolute;left:258px;top:1218px;" width="28" height="24.25" viewBox="0 0 261.76 226.69"><path d="M161.096.001l-30.225 52.351L100.647.001H-.005l130.877 226.688L261.749.001z" fill="#41B883"/><path d="M161.096.001l-30.225 52.351L100.647.001H52.346l78.526 136.01L209.398.001z" fill="#34495E"/></svg><div class="t" style="position:absolute;left:294.3px;top:1213.97px;font:normal 27.5px/33.0px 'Liberation Sans', sans-serif;color:#DFE1E5;white-space:pre;-webkit-text-stroke:0.3px currentColor;">VPDocAsideSponsors.vue</div><svg style="position:absolute;left:258px;top:1266px;" width="28" height="24.25" viewBox="0 0 261.76 226.69"><path d="M161.096.001l-30.225 52.351L100.647.001H-.005l130.877 226.688L261.749.001z" fill="#41B883"/><path d="M161.096.001l-30.225 52.351L100.647.001H52.346l78.526 136.01L209.398.001z" fill="#34495E"/></svg><div class="t" style="position:absolute;left:294.3px;top:1261.97px;font:normal 27.5px/33.0px 'Liberation Sans', sans-serif;color:#DFE1E5;white-space:pre;-webkit-text-stroke:0.3px currentColor;">VPDocFooter.vue</div><svg style="position:absolute;left:258px;top:1314px;" width="28" height="24.25" viewBox="0 0 261.76 226.69"><path d="M161.096.001l-30.225 52.351L100.647.001H-.005l130.877 226.688L261.749.001z" fill="#41B883"/><path d="M161.096.001l-30.225 52.351L100.647.001H52.346l78.526 136.01L209.398.001z" fill="#34495E"/></svg><div class="t" style="position:absolute;left:294.3px;top:1309.97px;font:normal 27.5px/33.0px 'Liberation Sans', sans-serif;color:#DFE1E5;white-space:pre;-webkit-text-stroke:0.3px currentColor;">VPDocFooterLastUpdated.vue</div><svg style="position:absolute;left:258px;top:1362px;" width="28" height="24.25" viewBox="0 0 261.76 226.69"><path d="M161.096.001l-30.225 52.351L100.647.001H-.005l130.877 226.688L261.749.001z" fill="#41B883"/><path d="M161.096.001l-30.225 52.351L100.647.001H52.346l78.526 136.01L209.398.001z" fill="#34495E"/></svg><div class="t" style="position:absolute;left:294.3px;top:1357.97px;font:normal 27.5px/33.0px 'Liberation Sans', sans-serif;color:#DFE1E5;white-space:pre;-webkit-text-stroke:0.3px currentColor;">VPDocOutlineDropdown.vue</div><svg style="position:absolute;left:258px;top:1410px;" width="28" height="24.25" viewBox="0 0 261.76 226.69"><path d="M161.096.001l-30.225 52.351L100.647.001H-.005l130.877 226.688L261.749.001z" fill="#41B883"/><path d="M161.096.001l-30.225 52.351L100.647.001H52.346l78.526 136.01L209.398.001z" fill="#34495E"/></svg><div class="t" style="position:absolute;left:294.3px;top:1405.97px;font:normal 27.5px/33.0px 'Liberation Sans', sans-serif;color:#DFE1E5;white-space:pre;-webkit-text-stroke:0.3px currentColor;">VPDocOutlineItem.vue</div><svg style="position:absolute;left:258px;top:1458px;" width="28" height="24.25" viewBox="0 0 261.76 226.69"><path d="M161.096.001l-30.225 52.351L100.647.001H-.005l130.877 226.688L261.749.001z" fill="#41B883"/><path d="M161.096.001l-30.225 52.351L100.647.001H52.346l78.526 136.01L209.398.001z" fill="#34495E"/></svg><div class="t" style="position:absolute;left:294.3px;top:1453.97px;font:normal 27.5px/33.0px 'Liberation Sans', sans-serif;color:#DFE1E5;white-space:pre;-webkit-text-stroke:0.3px currentColor;">VPFeature.vue</div><svg style="position:absolute;left:258px;top:1506px;" width="28" height="24.25" viewBox="0 0 261.76 226.69"><path d="M161.096.001l-30.225 52.351L100.647.001H-.005l130.877 226.688L261.749.001z" fill="#41B883"/><path d="M161.096.001l-30.225 52.351L100.647.001H52.346l78.526 136.01L209.398.001z" fill="#34495E"/></svg><div class="t" style="position:absolute;left:294.3px;top:1501.97px;font:normal 27.5px/33.0px 'Liberation Sans', sans-serif;color:#DFE1E5;white-space:pre;-webkit-text-stroke:0.3px currentColor;">VPFeatures.vue</div><svg style="position:absolute;left:258px;top:1554px;" width="28" height="24.25" viewBox="0 0 261.76 226.69"><path d="M161.096.001l-30.225 52.351L100.647.001H-.005l130.877 226.688L261.749.001z" fill="#41B883"/><path d="M161.096.001l-30.225 52.351L100.647.001H52.346l78.526 136.01L209.398.001z" fill="#34495E"/></svg><div class="t" style="position:absolute;left:294.3px;top:1549.97px;font:normal 27.5px/33.0px 'Liberation Sans', sans-serif;color:#DFE1E5;white-space:pre;-webkit-text-stroke:0.3px currentColor;">VPFlyout.vue</div><svg style="position:absolute;left:258px;top:1602px;" width="28" height="24.25" viewBox="0 0 261.76 226.69"><path d="M161.096.001l-30.225 52.351L100.647.001H-.005l130.877 226.688L261.749.001z" fill="#41B883"/><path d="M161.096.001l-30.225 52.351L100.647.001H52.346l78.526 136.01L209.398.001z" fill="#34495E"/></svg><div class="t" style="position:absolute;left:294.3px;top:1597.97px;font:normal 27.5px/33.0px 'Liberation Sans', sans-serif;color:#6F9FCF;white-space:pre;-webkit-text-stroke:0.3px currentColor;">VPFooter.vue</div><svg style="position:absolute;left:258px;top:1650px;" width="28" height="24.25" viewBox="0 0 261.76 226.69"><path d="M161.096.001l-30.225 52.351L100.647.001H-.005l130.877 226.688L261.749.001z" fill="#41B883"/><path d="M161.096.001l-30.225 52.351L100.647.001H52.346l78.526 136.01L209.398.001z" fill="#34495E"/></svg><div class="t" style="position:absolute;left:294.3px;top:1645.97px;font:normal 27.5px/33.0px 'Liberation Sans', sans-serif;color:#DFE1E5;white-space:pre;-webkit-text-stroke:0.3px currentColor;">VPHero.vue</div><svg style="position:absolute;left:258px;top:1698px;" width="28" height="24.25" viewBox="0 0 261.76 226.69"><path d="M161.096.001l-30.225 52.351L100.647.001H-.005l130.877 226.688L261.749.001z" fill="#41B883"/><path d="M161.096.001l-30.225 52.351L100.647.001H52.346l78.526 136.01L209.398.001z" fill="#34495E"/></svg><div class="t" style="position:absolute;left:294.3px;top:1693.97px;font:normal 27.5px/33.0px 'Liberation Sans', sans-serif;color:#DFE1E5;white-space:pre;-webkit-text-stroke:0.3px currentColor;">VPHome.vue</div><svg style="position:absolute;left:258px;top:1746px;" width="28" height="24.25" viewBox="0 0 261.76 226.69"><path d="M161.096.001l-30.225 52.351L100.647.001H-.005l130.877 226.688L261.749.001z" fill="#41B883"/><path d="M161.096.001l-30.225 52.351L100.647.001H52.346l78.526 136.01L209.398.001z" fill="#34495E"/></svg><div class="t" style="position:absolute;left:294.3px;top:1741.97px;font:normal 27.5px/33.0px 'Liberation Sans', sans-serif;color:#DFE1E5;white-space:pre;-webkit-text-stroke:0.3px currentColor;">VPHomeFeatures.vue</div><svg style="position:absolute;left:258px;top:1794px;" width="28" height="24.25" viewBox="0 0 261.76 226.69"><path d="M161.096.001l-30.225 52.351L100.647.001H-.005l130.877 226.688L261.749.001z" fill="#41B883"/><path d="M161.096.001l-30.225 52.351L100.647.001H52.346l78.526 136.01L209.398.001z" fill="#34495E"/></svg><div class="t" style="position:absolute;left:294.3px;top:1789.97px;font:normal 27.5px/33.0px 'Liberation Sans', sans-serif;color:#DFE1E5;white-space:pre;-webkit-text-stroke:0.3px currentColor;">VPHomeHero.vue</div><svg style="position:absolute;left:258px;top:1842px;" width="28" height="24.25" viewBox="0 0 261.76 226.69"><path d="M161.096.001l-30.225 52.351L100.647.001H-.005l130.877 226.688L261.749.001z" fill="#41B883"/><path d="M161.096.001l-30.225 52.351L100.647.001H52.346l78.526 136.01L209.398.001z" fill="#34495E"/></svg><div class="t" style="position:absolute;left:294.3px;top:1837.97px;font:normal 27.5px/33.0px 'Liberation Sans', sans-serif;color:#DFE1E5;white-space:pre;-webkit-text-stroke:0.3px currentColor;">VPHomeSponsors.vue</div><svg style="position:absolute;left:258px;top:1890px;" width="28" height="24.25" viewBox="0 0 261.76 226.69"><path d="M161.096.001l-30.225 52.351L100.647.001H-.005l130.877 226.688L261.749.001z" fill="#41B883"/><path d="M161.096.001l-30.225 52.351L100.647.001H52.346l78.526 136.01L209.398.001z" fill="#34495E"/></svg><div class="t" style="position:absolute;left:294.3px;top:1885.97px;font:normal 27.5px/33.0px 'Liberation Sans', sans-serif;color:#DFE1E5;white-space:pre;-webkit-text-stroke:0.3px currentColor;">VPImage.vue</div></div><div style="position:absolute;left:320px;top:1749px;width:296px;height:58px;background:transparent;box-sizing:border-box;border:4px solid #FF0000"></div><div style="position:absolute;left:732px;top:162px;width:2642px;height:2px;background:#393B40;"></div><div style="position:absolute;left:1020px;top:158px;width:294px;height:6px;background:#3574F0;border-radius:3px"></div><svg style="position:absolute;left:756px;top:106px;" width="32" height="32" viewBox="0 0 32 32"><g fill="none" stroke="#A57BD4" stroke-width="2.5"><path d="M13.5 4.5 H11.5 C9 4.5 8.5 6 8.5 8 V13 C8.5 15 7.5 16 5 16 C7.5 16 8.5 17 8.5 19 V24 C8.5 26 9 27.5 11.5 27.5 H13.5"/><path d="M18.5 4.5 H20.5 C23 4.5 23.5 6 23.5 8 V13 C23.5 15 24.5 16 27 16 C24.5 16 23.5 17 23.5 19 V24 C23.5 26 23 27.5 20.5 27.5 H18.5"/></g></svg><div class="t" style="position:absolute;left:797px;top:106.47px;font:normal 27.5px/33.0px 'Liberation Sans', sans-serif;color:#CED0D6;white-space:pre;-webkit-text-stroke:0.3px currentColor;">package.json</div><svg style="position:absolute;left:1046px;top:110px;" width="27.5" height="23.82" viewBox="0 0 261.76 226.69"><path d="M161.096.001l-30.225 52.351L100.647.001H-.005l130.877 226.688L261.749.001z" fill="#41B883"/><path d="M161.096.001l-30.225 52.351L100.647.001H52.346l78.526 136.01L209.398.001z" fill="#34495E"/></svg><div class="t" style="position:absolute;left:1085px;top:106.47px;font:normal 27.5px/33.0px 'Liberation Sans', sans-serif;color:#6F9FCF;white-space:pre;-webkit-text-stroke:0.3px currentColor;">VPFooter.vue</div><svg style="position:absolute;left:1270px;top:111px;" width="24" height="24" viewBox="0 0 24 24"><path d="M4 4 L20 20 M20 4 L4 20" stroke="#9A9DA3" stroke-width="2.2" stroke-linecap="round"/></svg><svg style="position:absolute;left:3330px;top:104px;" width="12" height="34" viewBox="0 0 12 34"><g fill="#CED0D6"><circle cx="6" cy="7.8" r="2.6"/><circle cx="6" cy="17.6" r="2.6"/><circle cx="6" cy="27.5" r="2.6"/></g></svg><svg style="position:absolute;left:3396px;top:96px;" width="44" height="46" viewBox="0 0 44 46"><g fill="none" stroke="#CED0D6" stroke-width="2.6" stroke-linejoin="round" stroke-linecap="round"><path d="M4.5 36 H38.5 L34 27 V19.5 C34 12 28.5 8 21.5 8 C14.5 8 9 12 9 19.5 V27 Z"/></g><path d="M17 40 H26 A4.5 4.5 0 0 1 17 40 Z" fill="#CED0D6"/></svg><svg style="position:absolute;left:3421px;top:101px;" width="16" height="16" viewBox="0 0 16 16"><circle cx="8" cy="8" r="7" fill="#548AF7"/></svg><div style="position:absolute;left:730px;top:472px;width:2644px;height:44px;background:#26282E;"></div><div style="position:absolute;left:914px;top:164px;width:2px;height:1886px;background:#313337;"></div><div style="position:absolute;left:2840px;top:164px;width:2px;height:1886px;background:#36383C;"></div><div style="position:absolute;left:920px;top:472px;width:160px;height:44px;background:#3B3D42;"></div><div style="position:absolute;left:920px;top:824px;width:176px;height:44px;background:#3B3D42;"></div><div style="position:absolute;left:1032px;top:208.5px;width:48px;height:43.5px;background:#393B40;"></div><div style="position:absolute;left:1961px;top:692px;width:352px;height:44px;background:#233524;"></div><div style="position:absolute;left:948px;top:560px;width:2px;height:219px;background:#2F3135;"></div><div style="position:absolute;left:980px;top:604px;width:2px;height:131px;background:#2F3135;"></div><div style="position:absolute;left:948px;top:2012px;width:2px;height:38px;background:#2F3135;"></div><div style="position:absolute;left:1080px;top:476px;width:3px;height:35px;background:#CED0D6;"></div><div style="position:absolute;left:746px;top:606px;width:8px;height:40px;background:#549159;border-radius:4px"></div><svg style="position:absolute;left:936px;top:438px;" width="24" height="34" viewBox="0 0 24 34"><circle cx="12" cy="11.5" r="9.5" fill="#F2C55C"/><rect x="7.5" y="17" width="9" height="5" fill="#F2C55C"/><path d="M7.5 25 H16.5 M8.5 29 H15.5" stroke="#DFE1E5" stroke-width="2"/></svg><svg style="position:absolute;left:895px;top:222px;" width="14" height="20" viewBox="0 0 14 20"><path d="M3 3 L10 10 L3 17" fill="none" stroke="#6F737A" stroke-width="2" stroke-linecap="round" stroke-linejoin="round"/></svg><div style="position:absolute;left:730px;top:164px;width:2644px;height:1886px;overflow:hidden"><div class="t" style="position:absolute;left:190px;top:2.5px;font:normal 26.67px/44px 'Liberation Mono', monospace;white-space:pre;color:#BCBEC4;-webkit-text-stroke:0.35px currentColor"><div><span style="color:#D5B778">&lt;script</span><span style="color:#BCBEC4"> setup lang</span><span style="color:#6AAB73">=&quot;ts&quot;</span><span style="color:#D5B778">&gt;</span></div><div><span style="color:#CF8E6D">import</span><span style="color:#BCBEC4"> </span><span style="color:#7A7E85">...</span></div><div>&#8203;</div><div><span style="color:#CF8E6D">const</span><span style="color:#BCBEC4"> { theme, frontmatter } = </span><span style="color:#56A8F5">useData</span><span style="color:#BCBEC4">()</span></div><div><span style="color:#CF8E6D">const</span><span style="color:#BCBEC4"> { hasSidebar } = </span><span style="color:#56A8F5">useSidebar</span><span style="color:#BCBEC4">()</span></div><div><span style="color:#D5B778">&lt;/script&gt;</span></div><div>&#8203;</div><div><span style="color:#D5B778">&lt;template&gt;</span></div><div><span style="color:#BCBEC4">  </span><span style="color:#D5B778">&lt;footer</span><span style="color:#BCBEC4"> v-if</span><span style="color:#6AAB73">=&quot;</span><span style="color:#C77DBB">theme</span><span style="color:#BCBEC4">.</span><span style="color:#C77DBB">footer</span><span style="color:#BCBEC4"> &amp;&amp; </span><span style="color:#C77DBB">frontmatter</span><span style="color:#BCBEC4">.</span><span style="color:#C77DBB">footer</span><span style="color:#BCBEC4"> !== </span><span style="color:#CF8E6D">false</span><span style="color:#6AAB73">&quot;</span><span style="color:#BCBEC4"> class</span><span style="color:#6AAB73">=&quot;VPFooter&quot;</span><span style="color:#BCBEC4"> :class</span><span style="color:#6AAB73">=&quot;</span><span style="color:#BCBEC4">{ </span><span style="color:#6AAB73">&#x27;has-sidebar&#x27;</span><span style="color:#BCBEC4">: </span><span style="color:#C77DBB">hasSidebar</span><span style="color:#BCBEC4"> }</span><span style="color:#6AAB73">&quot;</span><span style="color:#D5B778">&gt;</span></div><div><span style="color:#BCBEC4">    </span><span style="color:#D5B778">&lt;div</span><span style="color:#BCBEC4"> class</span><span style="color:#6AAB73">=&quot;container&quot;</span><span style="color:#D5B778">&gt;</span></div><div><span style="color:#BCBEC4">      111111111111</span></div><div><span style="color:#BCBEC4">      </span><span style="color:#D5B778">&lt;p</span><span style="color:#BCBEC4"> v-if</span><span style="color:#6AAB73">=&quot;</span><span style="color:#C77DBB">theme</span><span style="color:#BCBEC4">.</span><span style="color:#C77DBB">footer</span><span style="color:#BCBEC4">.</span><span style="color:#C77DBB">message</span><span style="color:#6AAB73">&quot;</span><span style="color:#BCBEC4"> class</span><span style="color:#6AAB73">=&quot;message&quot;</span><span style="color:#BCBEC4"> v-html</span><span style="color:#6AAB73">=&quot;</span><span style="color:#C77DBB">theme</span><span style="color:#BCBEC4">.</span><span style="color:#C77DBB">footer</span><span style="color:#BCBEC4">.</span><span style="color:#C77DBB">message</span><span style="color:#6AAB73">&quot;</span><span style="color:#D5B778">&gt;&lt;/p&gt;</span></div><div><span style="color:#BCBEC4">      </span><span style="color:#D5B778">&lt;p</span><span style="color:#BCBEC4"> v-if</span><span style="color:#6AAB73">=&quot;</span><span style="color:#C77DBB">theme</span><span style="color:#BCBEC4">.</span><span style="color:#C77DBB">footer</span><span style="color:#BCBEC4">.</span><span style="color:#C77DBB">copyright</span><span style="color:#6AAB73">&quot;</span><span style="color:#BCBEC4"> class</span><span style="color:#6AAB73">=&quot;copyright&quot;</span><span style="color:#BCBEC4"> v-html</span><span style="color:#6AAB73">=&quot;</span><span style="color:#C77DBB">theme</span><span style="color:#BCBEC4">.</span><span style="color:#C77DBB">footer</span><span style="color:#BCBEC4">.</span><span style="color:#C77DBB">copyright</span><span style="color:#6AAB73">&quot;</span><span style="color:#D5B778">&gt;&lt;/p&gt;</span></div><div><span style="color:#BCBEC4">    </span><span style="color:#D5B778">&lt;/div&gt;</span></div><div><span style="color:#BCBEC4">  </span><span style="color:#D5B778">&lt;/footer&gt;</span></div><div><span style="color:#D5B778">&lt;/template&gt;</span></div><div>&#8203;</div><div><span style="color:#D5B778">&lt;style</span><span style="color:#BCBEC4"> scoped</span><span style="color:#D5B778">&gt;</span></div><div><span style="color:#BCBEC4">.</span><span style="color:#D5B778">VPFooter</span><span style="color:#BCBEC4"> {</span></div><div><span style="color:#BCBEC4">  position: </span><span style="color:#6AAB73">relative</span><span style="color:#BCBEC4">;</span></div><div><span style="color:#BCBEC4">  z-index: </span><span style="color:#D5B778">var</span><span style="color:#BCBEC4">(</span><span style="color:#D5B778">--vp-z-index-footer</span><span style="color:#BCBEC4">);</span></div><div><span style="color:#BCBEC4">  border-top: </span><span style="color:#2AACB8">1</span><span style="color:#6AAB73">px solid </span><span style="color:#D5B778">var</span><span style="color:#BCBEC4">(</span><span style="color:#D5B778">--vp-c-gutter</span><span style="color:#BCBEC4">);</span></div><div><span style="color:#BCBEC4">  padding: </span><span style="color:#2AACB8">32</span><span style="color:#6AAB73">px </span><span style="color:#2AACB8">24</span><span style="color:#6AAB73">px</span><span style="color:#BCBEC4">;</span></div><div><span style="color:#BCBEC4">  background-color: </span><span style="color:#D5B778">var</span><span style="color:#BCBEC4">(</span><span style="color:#D5B778">--vp-c-bg</span><span style="color:#BCBEC4">);</span></div><div><span style="color:#BCBEC4">}</span></div><div>&#8203;</div><div><span style="color:#BCBEC4">.</span><span style="color:#D5B778">VPFooter</span><span style="color:#BCBEC4">.</span><span style="color:#D5B778">has-sidebar</span><span style="color:#BCBEC4"> {</span></div><div><span style="color:#BCBEC4">  display: </span><span style="color:#6AAB73">none</span><span style="color:#BCBEC4">;</span></div><div><span style="color:#BCBEC4">}</span></div><div>&#8203;</div><div><span style="color:#BCBEC4">.</span><span style="color:#D5B778">VPFooter</span><span style="color:#BCBEC4"> :</span><span style="color:#D5B778">deep</span><span style="color:#BCBEC4">(</span><span style="color:#D5B778">a</span><span style="color:#BCBEC4">) {</span></div><div><span style="color:#BCBEC4">  text-decoration-line: </span><span style="color:#6AAB73">underline</span><span style="color:#BCBEC4">;</span></div><div><span style="color:#BCBEC4">  text-underline-offset: </span><span style="color:#2AACB8">2</span><span style="color:#6AAB73">px</span><span style="color:#BCBEC4">;</span></div><div><span style="color:#BCBEC4">  transition: </span><span style="color:#6AAB73">color </span><span style="color:#2AACB8">0.25</span><span style="color:#6AAB73">s</span><span style="color:#BCBEC4">;</span></div><div><span style="color:#BCBEC4">}</span></div><div>&#8203;</div><div><span style="color:#BCBEC4">.</span><span style="color:#D5B778">VPFooter</span><span style="color:#BCBEC4"> :</span><span style="color:#D5B778">deep</span><span style="color:#BCBEC4">(</span><span style="color:#D5B778">a</span><span style="color:#BCBEC4">:</span><span style="color:#D5B778">hover</span><span style="color:#BCBEC4">) {</span></div><div><span style="color:#BCBEC4">  color: </span><span style="color:#D5B778">var</span><span style="color:#BCBEC4">(</span><span style="color:#D5B778">--vp-c-text-1</span><span style="color:#BCBEC4">);</span></div><div><span style="color:#BCBEC4">}</span></div><div>&#8203;</div><div><span style="color:#CF8E6D">@media</span><span style="color:#BCBEC4"> (min-width: </span><span style="color:#2AACB8">768</span><span style="color:#6AAB73">px</span><span style="color:#BCBEC4">) {</span></div><div><span style="color:#BCBEC4">  .</span><span style="color:#D5B778">VPFooter</span><span style="color:#BCBEC4"> {</span></div><div><span style="color:#BCBEC4">    padding: </span><span style="color:#2AACB8">32</span><span style="color:#6AAB73">px</span><span style="color:#BCBEC4">;</span></div></div><div class="t" style="position:absolute;left:0px;width:64px;top:2.5px;font:normal 26.67px/44px 'Liberation Mono', monospace;white-space:pre;text-align:right;-webkit-text-stroke:0.3px currentColor;transform:scaleX(0.87);transform-origin:right top"><div style="color:#4B5059">1</div><div style="color:#4B5059">2</div><div style="color:#4B5059">4</div><div style="color:#4B5059">5</div><div style="color:#4B5059">6</div><div style="color:#4B5059">7</div><div style="color:#4B5059">8</div><div style="color:#A1A3AB">9</div><div style="color:#4B5059">10</div><div style="color:#4B5059">11</div><div style="color:#4B5059">12</div><div style="color:#4B5059">13</div><div style="color:#4B5059">14</div><div style="color:#4B5059">15</div><div style="color:#4B5059">16</div><div style="color:#4B5059">17</div><div style="color:#4B5059">18</div><div style="color:#4B5059">19</div><div style="color:#4B5059">20</div><div style="color:#4B5059">21</div><div style="color:#4B5059">22</div><div style="color:#4B5059">23</div><div style="color:#4B5059">24</div><div style="color:#4B5059">25</div><div style="color:#4B5059">26</div><div style="color:#4B5059">27</div><div style="color:#4B5059">28</div><div style="color:#4B5059">29</div><div style="color:#4B5059">30</div><div style="color:#4B5059">31</div><div style="color:#4B5059">32</div><div style="color:#4B5059">33</div><div style="color:#4B5059">34</div><div style="color:#4B5059">35</div><div style="color:#4B5059">36</div><div style="color:#4B5059">37</div><div style="color:#4B5059">38</div><div style="color:#4B5059">39</div><div style="color:#4B5059">40</div><div style="color:#4B5059">41</div><div style="color:#4B5059">42</div><div style="color:#4B5059">43</div><div style="color:#4B5059">44</div></div></div><div style="position:absolute;left:806px;top:1104px;width:16px;height:16px;background:#050505;"></div><div style="position:absolute;left:828px;top:1104px;width:16px;height:16px;background:#050505;"></div><div style="position:absolute;left:850px;top:1104px;width:16px;height:16px;background:#C9C9C9;"></div><div style="position:absolute;left:872px;top:1104px;width:16px;height:16px;background:#050505;"></div><div style="position:absolute;left:806px;top:1192px;width:16px;height:16px;background:#DEDEDE;"></div><div style="position:absolute;left:828px;top:1192px;width:16px;height:16px;background:#1B1B1F;"></div><div style="position:absolute;left:850px;top:1192px;width:16px;height:16px;background:#DEDEDE;"></div><div style="position:absolute;left:872px;top:1192px;width:16px;height:16px;background:#1B1B1F;"></div><div style="position:absolute;left:806px;top:1808px;width:16px;height:16px;background:#2F3033;"></div><div style="position:absolute;left:828px;top:1808px;width:16px;height:16px;background:#D7D5CE;"></div><div style="position:absolute;left:850px;top:1808px;width:16px;height:16px;background:#2F3033;"></div><div style="position:absolute;left:872px;top:1808px;width:16px;height:16px;background:#2F3033;"></div><div style="position:absolute;left:944px;top:592px;width:344px;height:62px;background:transparent;box-sizing:border-box;border:4px solid #FF0000"></div><div style="position:absolute;left:732px;top:2050px;width:2642px;height:2px;background:#303236;"></div><div class="t" style="position:absolute;left:752px;top:2058.97px;font:normal 27.5px/33.0px 'Liberation Sans', sans-serif;color:#A8ABB0;white-space:pre;-webkit-text-stroke:0.3px currentColor;">template</div><div style="position:absolute;left:3354px;top:220px;width:14px;height:1182px;background:#3E4044;border-radius:7px"></div><svg style="position:absolute;left:3334px;top:177px;" width="28" height="24" viewBox="0 0 28 24"><path d="M3.2 9.6 L11.4 17.4 L23.8 4.6" fill="none" stroke="#4A9D55" stroke-width="5.4" stroke-linejoin="miter"/></svg><div style="position:absolute;left:3338px;top:490px;width:4px;height:11px;background:#549159;"></div><svg style="position:absolute;left:26px;top:2118px;" width="20" height="20" viewBox="0 0 20 20"><rect x="2.5" y="2.5" width="15" height="15" rx="3.5" fill="#25324D" stroke="#548AF7" stroke-width="2.2"/></svg><div class="t" style="position:absolute;left:52px;top:2110.37px;font:normal 27.5px/33.0px 'Liberation Sans', sans-serif;color:#A8ABB0;white-space:pre;-webkit-text-stroke:0.3px currentColor;">vitepress</div><div class="t" style="position:absolute;left:214px;top:2110.37px;font:normal 27.5px/33.0px 'Liberation Sans', sans-serif;color:#A8ABB0;white-space:pre;-webkit-text-stroke:0.3px currentColor;">src</div><div class="t" style="position:absolute;left:300px;top:2110.37px;font:normal 27.5px/33.0px 'Liberation Sans', sans-serif;color:#A8ABB0;white-space:pre;-webkit-text-stroke:0.3px currentColor;">client</div><div class="t" style="position:absolute;left:417px;top:2110.37px;font:normal 27.5px/33.0px 'Liberation Sans', sans-serif;color:#A8ABB0;white-space:pre;-webkit-text-stroke:0.3px currentColor;">theme-default</div><div class="t" style="position:absolute;left:640px;top:2110.37px;font:normal 27.5px/33.0px 'Liberation Sans', sans-serif;color:#A8ABB0;white-space:pre;-webkit-text-stroke:0.3px currentColor;">components</div><svg style="position:absolute;left:182px;top:2119px;" width="14" height="20" viewBox="0 0 14 20"><path d="M3 3 L10 10 L3 17" fill="none" stroke="#A8ABB0" stroke-width="2.1" stroke-linecap="round" stroke-linejoin="round"/></svg><svg style="position:absolute;left:268px;top:2119px;" width="14" height="20" viewBox="0 0 14 20"><path d="M3 3 L10 10 L3 17" fill="none" stroke="#A8ABB0" stroke-width="2.1" stroke-linecap="round" stroke-linejoin="round"/></svg><svg style="position:absolute;left:384px;top:2119px;" width="14" height="20" viewBox="0 0 14 20"><path d="M3 3 L10 10 L3 17" fill="none" stroke="#A8ABB0" stroke-width="2.1" stroke-linecap="round" stroke-linejoin="round"/></svg><svg style="position:absolute;left:609px;top:2119px;" width="14" height="20" viewBox="0 0 14 20"><path d="M3 3 L10 10 L3 17" fill="none" stroke="#A8ABB0" stroke-width="2.1" stroke-linecap="round" stroke-linejoin="round"/></svg><svg style="position:absolute;left:809px;top:2119px;" width="14" height="20" viewBox="0 0 14 20"><path d="M3 3 L10 10 L3 17" fill="none" stroke="#A8ABB0" stroke-width="2.1" stroke-linecap="round" stroke-linejoin="round"/></svg><svg style="position:absolute;left:845px;top:2117px;" width="26" height="22.52" viewBox="0 0 261.76 226.69"><path d="M161.096.001l-30.225 52.351L100.647.001H-.005l130.877 226.688L261.749.001z" fill="#41B883"/><path d="M161.096.001l-30.225 52.351L100.647.001H52.346l78.526 136.01L209.398.001z" fill="#34495E"/></svg><div class="t" style="position:absolute;left:882px;top:2110.37px;font:normal 27.5px/33.0px 'Liberation Sans', sans-serif;color:#A8ABB0;white-space:pre;-webkit-text-stroke:0.3px currentColor;">VPFooter.vue</div><svg style="position:absolute;left:2640px;top:2111px;" width="36" height="34" viewBox="0 0 36 34"><g fill="none" stroke="#A8ABB0" stroke-width="0"></g><path d="M18 4 C12 4 9.5 6 9 9 C5 9.5 3.5 12 3.5 16 V24 C3.5 28 8 31 18 31 C28 31 32.5 28 32.5 24 V16 C32.5 12 31 9.5 27 9 C26.5 6 24 4 18 4 Z" fill="#DFE1E5"/><rect x="8" y="11" width="9" height="7" rx="3" fill="#2B2D30"/><rect x="19" y="11" width="9" height="7" rx="3" fill="#2B2D30"/><rect x="11.5" y="21" width="3" height="6" rx="1.5" fill="#2B2D30"/><rect x="21.5" y="21" width="3" height="6" rx="1.5" fill="#2B2D30"/></svg><div class="t" style="position:absolute;left:2706px;top:2110.37px;font:normal 27.5px/33.0px 'Liberation Sans', sans-serif;color:#A8ABB0;white-space:pre;-webkit-text-stroke:0.3px currentColor;">9:11</div><svg style="position:absolute;left:2789px;top:2112px;" width="26" height="32" viewBox="0 0 26 32"><path d="M3 4 H10 L13.5 17 L18 4 H24.5 L15 27 C13.5 30.5 11 31 6 31 L7 26 C10 26 10.8 25 11 24 Z" fill="#F21414"/></svg><div class="t" style="position:absolute;left:2851px;top:2110.37px;font:normal 27.5px/33.0px 'Liberation Sans', sans-serif;color:#A8ABB0;white-space:pre;-webkit-text-stroke:0.3px currentColor;">LF</div><div class="t" style="position:absolute;left:2913px;top:2110.37px;font:normal 27.5px/33.0px 'Liberation Sans', sans-serif;color:#A8ABB0;white-space:pre;-webkit-text-stroke:0.3px currentColor;">UTF-8</div><div class="t" style="position:absolute;left:3024px;top:2110.37px;font:normal 27.5px/33.0px 'Liberation Sans', sans-serif;color:#A8ABB0;white-space:pre;-webkit-text-stroke:0.3px currentColor;">2 spaces*</div><svg style="position:absolute;left:3183px;top:2113px;" width="32" height="30" viewBox="0 0 32 30"><g fill="none" stroke="#CED0D6" stroke-width="2.4" stroke-linecap="round"><rect x="3.5" y="11.5" width="19.5" height="16" rx="3"/><path d="M19 11.5 V8 C19 4.5 21.5 2.5 24.5 2.5 C27.5 2.5 30 4.5 30 8 V10"/><path d="M13.25 17 V21"/></g></svg><div style="position:absolute;left:3228px;top:2100px;width:156px;height:58px;background:#29365A;"></div><div style="position:absolute;left:3384px;top:2100px;width:52px;height:58px;background:#1F2024;"></div><div class="t" style="position:absolute;left:3247px;top:2110.37px;font:normal 27.5px/33.0px 'Liberation Sans', sans-serif;color:#A8ABB0;white-space:pre;-webkit-text-stroke:0.3px currentColor;">776 of 1024M</div></div></body></html>
